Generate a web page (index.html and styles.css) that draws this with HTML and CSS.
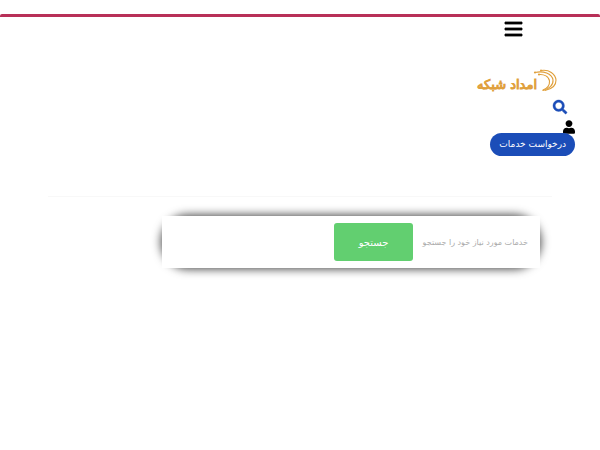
FILE: index.html
```html
<!DOCTYPE html>
<html lang="fa" dir="rtl">
<head>
    <meta charset="UTF-8">
    <meta name="viewport" content="width=device-width, initial-scale=1.0">
    <title>امداد شبکه</title>
    <link rel="stylesheet" href="styles.css">
</head>
<body>
    <header class="site-header">
        <button type="button" class="menu-btn" aria-label="منو">
            <svg viewBox="0 0 17 16" width="17" height="16"><path d="M0 1h17v2H0zM0 7h17v2H0zM0 13h17v2H0z" stroke="#000" stroke-width=".8"/></svg>
        </button>

        <a href="#" class="logo">
            <svg viewBox="0 0 24 24" width="24" height="24" fill="none" stroke="#e0a03c" stroke-linecap="round">
                <path d="M6 5.500C11 5 16 7.500 16.500 12c.3 4-2.500 7.500-6.500 9" stroke-width="1.100"/>
                <path d="M2 3.500C10 1.500 19 4.500 20 11c.5 5-4 9-10 10.500" stroke-width="1.100"/>
                <path d="M8 1.500C16 0 22.500 5 23 11c.2 5-4 9-11 10.500" stroke-width="1.100"/>
                <circle cx="6" cy="5.500" r="1.100" fill="#e0a03c" stroke="none"/>
                <circle cx="2" cy="3.500" r="1.100" fill="#e0a03c" stroke="none"/>
                <circle cx="8" cy="1.500" r="1" fill="#e0a03c" stroke="none"/>
            </svg>
            <span>امداد شبکه</span>
        </a>

        <button type="button" class="search-icon" aria-label="جستجو">
            <svg viewBox="0 0 512 512" width="14" height="14" fill="#1b4db8" stroke="#1b4db8" stroke-width="16"><path d="M505 442.700L405.300 343c-4.500-4.500-10.600-7-17-7H372c27.600-35.300 44-79.700 44-128C416 93.100 322.900 0 208 0S0 93.100 0 208s93.100 208 208 208c48.300 0 92.700-16.400 128-44v16.300c0 6.400 2.500 12.500 7 17l99.700 99.700c9.400 9.400 24.600 9.400 33.900 0l28.300-28.300c9.400-9.400 9.400-24.600.1-34zM208 336c-70.700 0-128-57.200-128-128 0-70.700 57.200-128 128-128 70.700 0 128 57.200 128 128 0 70.700-57.200 128-128 128z"/></svg>
        </button>

        <a href="#" class="user-icon" aria-label="حساب کاربری">
            <svg viewBox="0 0 448 512" width="12" height="14"><path d="M224 256c70.700 0 128-57.300 128-128S294.700 0 224 0 96 57.300 96 128s57.300 128 128 128zm89.600 32h-16.700c-22.200 10.200-46.900 16-72.900 16s-50.600-5.800-72.900-16h-16.700C60.200 288 0 348.200 0 422.400V464c0 26.500 21.500 48 48 48h352c26.500 0 48-21.500 48-48v-41.600c0-74.200-60.200-134.400-134.400-134.400z"/></svg>
        </a>

        <a href="#" class="request-btn">درخواست خدمات</a>
    </header>

    <main class="content">
        <form class="search-form">
            <div class="search-inner">
                <input type="text" class="search-input" placeholder="خدمات مورد نیاز خود را جستجو" aria-label="جستجوی خدمات">
                <button type="submit" class="search-btn">جستجو</button>
            </div>
        </form>
    </main>
</body>
</html>
```
FILE: styles.css
```css
* {
    box-sizing: border-box;
}

body {
    min-height: 100vh;
    margin: 0;
    padding: 14px 0 32px;
    background-color: #fff;
    font-family: "DejaVu Sans", sans-serif;
}

button {
    padding: 0;
    border: none;
    background: none;
    font-family: inherit;
    cursor: pointer;
}

a {
    text-decoration: none;
}

svg {
    display: block;
    overflow: visible;
}

.site-header {
    display: flex;
    flex-direction: column;
    align-items: flex-start;
    padding: 4px 25px 0;
    border-top: 3px solid #b83058;
    border-radius: 2px;
}

.menu-btn {
    margin-right: 53px;
}

.logo {
    display: flex;
    align-items: flex-end;
    height: 26px;
    margin: 32px 18px 0;
    color: #e0a03c;
    font-size: 13px;
    line-height: 20px;
    white-space: nowrap;
    -webkit-text-stroke: 1px #e0a03c;
}

.logo svg {
    margin-left: -4px;
    margin-bottom: 2px;
}

.search-icon {
    margin: 5px 8px 0;
}

.user-icon {
    margin-top: 6px;
}

.request-btn {
    height: 23px;
    margin-top: -1px;
    padding: 0 9px;
    border-radius: 12px;
    background-color: #1b4db8;
    color: #fff;
    font-size: 9px;
    line-height: 22px;
}

.content {
    margin: 40px 48px 0;
    padding-top: 19px;
    border-top: 1px solid #f8f8f8;
}

.search-form {
    width: 75%;
    margin-right: 12px;
    border-radius: 26px;
    box-shadow: 0 0 10px 1px #444;
}

.search-inner {
    display: flex;
    align-items: center;
    gap: 6px;
    padding: 7px 12px;
    background-color: #fff;
}

.search-input {
    width: 109px;
    padding: 0;
    border: none;
    outline: none;
    background: none;
    font-family: inherit;
    font-size: 8px;
}

.search-input::placeholder {
    color: #aaa;
}

.search-btn {
    width: 79px;
    height: 38px;
    border-radius: 3px;
    background-color: #62cf70;
    color: #fff;
    font-size: 10px;
}
```
